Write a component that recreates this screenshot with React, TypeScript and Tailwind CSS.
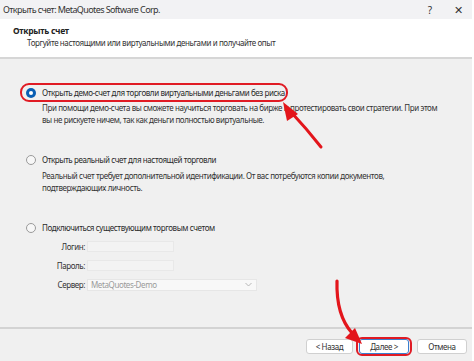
import React from "react";

function Radio({ checked }: { checked?: boolean }) {
  if (checked) {
    return (
      <span className="w-[10px] h-[10px] rounded-full bg-[#0a5fb4] flex items-center justify-center shrink-0">
        <span className="w-[4px] h-[4px] rounded-full bg-white" />
      </span>
    );
  }
  return <span className="w-[10px] h-[10px] rounded-full border border-[#9a9a9a] bg-[#f7f7f7] shrink-0" />;
}

function Field({ label, wide, value }: { label: string; wide?: boolean; value?: string }) {
  return (
    <div className="flex items-center h-[19px]">
      <span className="w-[61px] text-right pr-[2px] text-[#333]">{label}</span>
      <div
        className={
          wide
            ? "w-[170px] h-[12px] bg-[#f8f8f8] border border-[#e6e6e6] flex items-center justify-between pl-[3px] pr-[4px] text-[#9a9a9a]"
            : "w-[87px] h-[11px] bg-[#f3f3f3] border border-[#e8e8e8]"
        }
      >
        {value}
        {wide && (
          <svg width="7" height="5" viewBox="0 0 7 5">
            <path d="M0.5 1 L3.5 4 L6.5 1" fill="none" stroke="#b0b0b0" strokeWidth="0.9" />
          </svg>
        )}
      </div>
    </div>
  );
}

export default function App() {
  return (
    <div
      className="relative w-[474px] h-[361px] bg-white overflow-hidden text-[8px] leading-[12px] tracking-[-0.4px] whitespace-nowrap text-[#222]"
      style={{ fontFamily: '"Noto Sans", "Open Sans", sans-serif' }}
    >
      <div className="w-[472px] h-full flex flex-col">
        {/* title bar */}
        <div className="h-[19px] bg-[#f2f2f4] flex items-center pl-[3px] text-[9px] tracking-[-0.6px] text-[#333]">
          <span>Открыть счет: MetaQuotes Software Corp.</span>
          <span className="ml-auto mr-[22px] text-[10px]">?</span>
          <span className="mr-[10px] text-[11px] font-light">✕</span>
        </div>

        {/* header */}
        <div className="h-[38px] bg-white pl-[13px] pt-[6px]">
          <div className="font-bold text-[8.5px] tracking-[-0.3px]">Открыть счет</div>
          <div className="pl-[14px] text-[#333]">Торгуйте настоящими или виртуальными деньгами и получайте опыт</div>
        </div>

        <div className="h-[2px] bg-[#d6d6d6]" />

        {/* body */}
        <div className="flex-1 bg-[#f0f0f0] pl-[26px] pt-[28px] text-[#2a2a2a]">
          <div className="flex items-center gap-[6px] h-[12px]">
            <Radio checked />
            <span>Открыть демо-счет для торговли виртуальными деньгами без риска</span>
          </div>
          <div className="pl-[16px] pt-[3px] text-[#333]">
            <div>При помощи демо-счета вы сможете научиться торговать на бирже и протестировать свои стратегии. При этом</div>
            <div>вы не рискуете ничем, так как деньги полностью виртуальные.</div>
          </div>

          <div className="flex items-center gap-[6px] h-[12px] mt-[28px]">
            <Radio />
            <span>Открыть реальный счет для настоящей торговли</span>
          </div>
          <div className="pl-[16px] pt-[4px] text-[#333]">
            <div>Реальный счет требует дополнительной идентификации. От вас потребуются копии документов,</div>
            <div>подтверждающих личность.</div>
          </div>

          <div className="flex items-center gap-[6px] h-[12px] mt-[28px]">
            <Radio />
            <span>Подключиться существующим торговым счетом</span>
          </div>
          <div className="pt-[3px] flex flex-col">
            <Field label="Логин:" />
            <Field label="Пароль:" />
            <Field label="Сервер:" wide value="MetaQuotes-Demo" />
          </div>
        </div>

        <div className="h-[2px] bg-[#d3d3d3]" />

        {/* footer */}
        <div className="h-[32px] bg-[#f0f0f0] flex items-center justify-end pr-[5px] pt-[3px]">
          <button className="w-[47px] h-[15px] bg-white border border-[#d0d0d0] rounded-[3px] text-[8px] text-[#333]">
            &lt; Назад
          </button>
          <div className="relative ml-[6px]">
            <button className="w-[50px] h-[15px] bg-white border border-[#3a7fd0] rounded-[3px] text-[8px] text-[#333]">
              Далее &gt;
            </button>
            <span className="absolute -inset-x-[3px] -inset-y-[2px] border-2 border-[#e01b24] rounded-[6px]" />
          </div>
          <button className="ml-[8px] w-[50px] h-[15px] bg-white border border-[#d0d0d0] rounded-[3px] text-[8px] text-[#333]">
            Отмена
          </button>
        </div>
      </div>

      {/* red highlight around first option */}
      <span className="absolute left-[20px] top-[83px] w-[268px] h-[19px] border-2 border-[#e01b24] rounded-[9px]" />

      {/* arrows */}
      <svg className="absolute inset-0 pointer-events-none" width="474" height="361" viewBox="0 0 474 361">
        <path d="M321 147 Q306 128 291 112" fill="none" stroke="#e3151b" strokeWidth="3" strokeLinecap="round" />
        <path d="M283 102 L298 114 L287 121 Z" fill="#e3151b" />
        <path d="M337 281 Q336 315 352 333" fill="none" stroke="#e3151b" strokeWidth="3.2" strokeLinecap="round" />
        <path d="M362 344 L345 338 L355 328 Z" fill="#e3151b" />
      </svg>
    </div>
  );
}
